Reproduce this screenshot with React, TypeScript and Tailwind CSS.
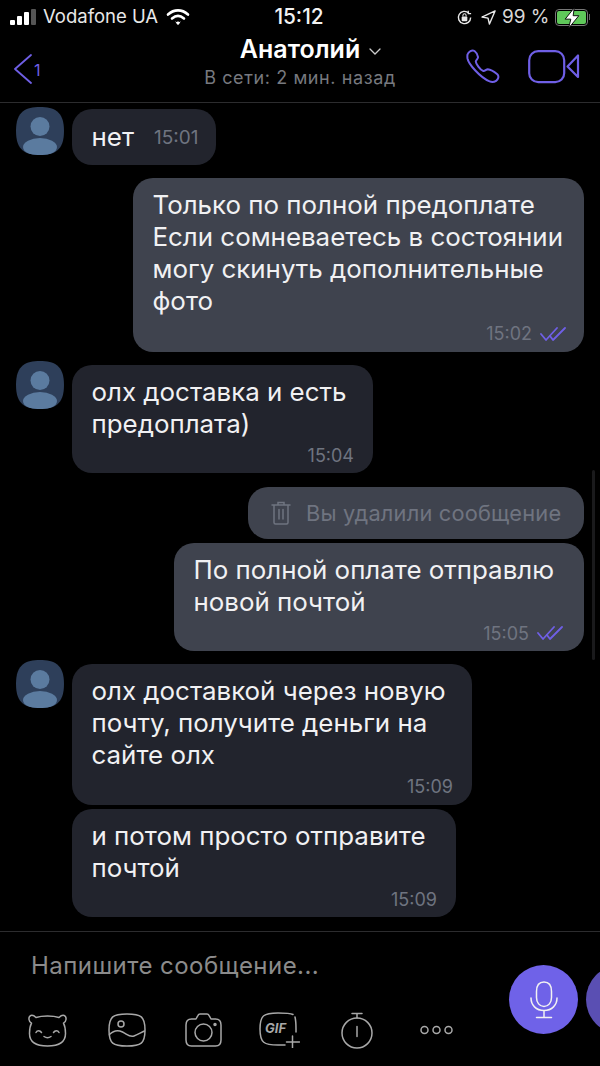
import React from 'react';

const PURPLE = '#6f5fe6';

const Avatar = () => (
  <svg viewBox="0 0 48 48" className="w-12 h-12 shrink-0">
    <defs>
      <clipPath id="avatarClip">
        <path d="M24 0C38 0 48 4 48 24C48 44 38 48 24 48C10 48 0 44 0 24C0 4 10 0 24 0Z" />
      </clipPath>
    </defs>
    <g clipPath="url(#avatarClip)">
      <rect width="48" height="48" fill="#2e3f5a" />
      <circle cx="24" cy="19.5" r="9.5" fill="#5b7b9f" />
      <ellipse cx="24" cy="40" rx="17" ry="9" fill="#5b7b9f" />
    </g>
  </svg>
);

const Checks = () => (
  <svg viewBox="0 0 26 14" className="w-[26px] h-[14px]" fill="none" stroke={PURPLE} strokeWidth="1.8" strokeLinecap="round" strokeLinejoin="round">
    <path d="M1 7l5 6L17 1" />
    <path d="M10 9l3 4L25 1" />
  </svg>
);

const Time = ({ t, read }: { t: string; read?: boolean }) => (
  <div className="flex items-center justify-end gap-2 h-5 text-[18px] text-[#6f7480]">
    <span>{t}</span>
    {read && <Checks />}
  </div>
);

const Line = ({ children }: { children: React.ReactNode }) => (
  <div className="text-[25.9px] leading-[32.3px] text-[#f1f1f3] whitespace-nowrap">{children}</div>
);

const Incoming = ({ lines, time, width, avatar, top }: { lines: string[]; time: string; width: string; avatar?: boolean; top: string }) => (
  <div className={`flex items-start gap-2 pl-4 ${top}`}>
    <div className="w-12 shrink-0 -mt-1">{avatar && <Avatar />}</div>
    <div className={`bg-[#22242d] rounded-[20px] pl-[19.5px] pr-[19px] pt-[10.5px] pb-[8px] ${width}`}>
      {lines.map((l) => <Line key={l}>{l}</Line>)}
      <div className="mt-[5px]"><Time t={time} /></div>
    </div>
  </div>
);

const Outgoing = ({ lines, time, width, top, inset, timeGap }: { lines: string[]; time: string; width: string; top: string; inset: string; timeGap: string }) => (
  <div className={`flex justify-end pr-4 ${top}`}>
    <div className={`bg-[#3f434e] rounded-[20px] pl-[19.5px] pt-[10.5px] pb-[8px] ${inset} ${width}`}>
      {lines.map((l) => <Line key={l}>{l}</Line>)}
      <div className={timeGap}><Time t={time} read /></div>
    </div>
  </div>
);

const StatusBar = () => (
  <div className="h-[34px] flex items-center justify-between pl-[10px] pr-[10px] text-white">
    <div className="flex items-center gap-[7px] w-[220px]">
      <div className="flex items-end gap-[2px] h-[16px]">
        <div className="w-[5px] h-[5px] bg-white rounded-[1px]" />
        <div className="w-[5px] h-[9px] bg-white rounded-[1px]" />
        <div className="w-[5px] h-[13px] bg-white rounded-[1px]" />
        <div className="w-[5px] h-[16px] bg-[#555] rounded-[1px]" />
      </div>
      <span className="text-[18.5px] text-[#e8e8e8]">Vodafone UA</span>
      <svg viewBox="0 0 24 18" className="w-[24px] h-[18px] ml-[1px]" fill="none" stroke="#fff" strokeWidth="2.6" strokeLinecap="round">
        <path d="M2 6.5C8 1 16 1 22 6.5" />
        <path d="M6 10.5C10 7 14 7 18 10.5" />
        <circle cx="12" cy="15" r="1.4" fill="#fff" stroke="none" />
        <path d="M10 14l2 2.5 2-2.5" strokeWidth="1" />
      </svg>
    </div>
    <span className="text-[20.8px] font-medium text-[#f2f2f2] ml-[-2px]">15:12</span>
    <div className="flex items-center justify-end gap-[5px] w-[220px]">
      <svg viewBox="0 0 18 18" className="w-[17px] h-[17px]" fill="none" stroke="#e8e8e8" strokeWidth="1.5">
        <path d="M15.5 9a6.5 6.5 0 1 1-2-4.7" />
        <path d="M13 1.8v3h3" strokeWidth="1.3" />
        <rect x="6" y="8" width="6" height="5" rx="1" fill="#e8e8e8" stroke="none" />
        <path d="M7.3 8V6.8a1.7 1.7 0 0 1 3.4 0V8" strokeWidth="1.1" />
      </svg>
      <svg viewBox="0 0 16 16" className="w-[15px] h-[15px] ml-[3px]" fill="none" stroke="#e8e8e8" strokeWidth="1.5" strokeLinejoin="round">
        <path d="M15 1L1 7.5l6.5 1.2L9 15z" />
      </svg>
      <span className="text-[19px] text-[#d8d8d8] ml-[1px]">99 %</span>
      <div className="flex items-center">
        <div className="relative w-[33px] h-[17px] rounded-[4px] border border-[#777] p-[1px]">
          <div className="w-full h-full rounded-[2px] bg-[#5fc85a]" />
          <svg viewBox="0 0 14 18" className="absolute left-[8px] -top-[3px] w-[16px] h-[22px]">
            <path d="M9 0L1 10h5l-2 8 9-11H8z" fill="#fff" stroke="#000" strokeWidth="0.8" />
          </svg>
        </div>
        <div className="w-[1.5px] h-[6px] bg-[#666] ml-[1px]" />
      </div>
    </div>
  </div>
);

const Header = () => (
  <div className="h-[69px] border-b border-[#2c2c2e] flex items-start relative">
    <div className="absolute left-[13px] top-[20px] flex items-center">
      <svg viewBox="0 0 20 30" className="w-[20px] h-[30px]" fill="none" stroke={PURPLE} strokeWidth="1.8" strokeLinecap="round" strokeLinejoin="round">
        <path d="M18 1L2 15l16 14" />
      </svg>
      <span className="text-[16px] text-[#6f5fe6] ml-[1px] mt-[1px]">1</span>
    </div>
    <div className="ml-[205px] flex flex-col items-center pt-[2px] w-[190px]">
      <div className="flex items-center gap-[9px] h-[29px] ml-[21px] -mt-[1px]">
        <span className="text-[25px] font-semibold text-white whitespace-nowrap">Анатолий</span>
        <svg viewBox="0 0 12 7" className="w-[12px] h-[7px] mt-[3px]" fill="none" stroke="#ccc" strokeWidth="1.3" strokeLinecap="round">
          <path d="M1 1l5 5 5-5" />
        </svg>
      </div>
      <span className="text-[18px] leading-[24px] text-[#77797f] tracking-[0.6px] mt-[2px] whitespace-nowrap">В сети: 2 мин. назад</span>
    </div>
    <svg viewBox="0 0 36 36" className="absolute left-[465px] top-[15px] w-[36px] h-[36px]" fill="none" stroke={PURPLE} strokeWidth="2" strokeLinejoin="round">
      <path d="M2.5 5.5C3.5 2.5 7 .5 9.5 2c1.5 1 3 4 3.5 6 .3 1.500-2 3-2.200 4.300-.2 2 4.500 8.800 7.500 9.700 1.500.4 3-1.800 4.500-1.700 2 .2 7 3 9.500 5 2 2 1 5-1.200 6.500-2 1.300-4 1.600-6.500.6C15 28.500 3.500 15 2.500 9.500c-.2-1.500-.2-2.800 0-4z" />
    </svg>
    <svg viewBox="0 0 52 34" className="absolute left-[528px] top-[16px] w-[52px] h-[34px]" fill="none" stroke={PURPLE} strokeWidth="2.200" strokeLinejoin="round">
      <rect x="1.200" y="1.200" width="35" height="31" rx="9" />
      <path d="M50 5.500V27L39.500 16.500z" />
    </svg>
  </div>
);

const iconStroke = { fill: 'none', stroke: '#a8a8a8', strokeWidth: 1.5, strokeLinecap: 'round', strokeLinejoin: 'round' } as const;

const ToolIcons = () => (
  <div className="flex items-center pl-[28px] h-[40px]">
    <svg viewBox="0 0 39 34" className="w-[39px] h-[34px]" {...iconStroke}>
      <path d="M8 4.500C4 .5 .5 2.500 1 6.500c.2 1.800 1.200 3 2.500 3.700C1.500 14 1.500 18 1.500 20.500 1.500 30 9 33 19.500 33S37.500 30 37.500 20.500c0-2.500 0-6.500-2-10.300 1.300-.7 2.300-1.900 2.500-3.700.5-4-3-6-7-2C25 2.500 14 2.500 8 4.500z" />
      <path d="M8 19.500c1.200-2.500 4-2.500 5.500 0M25.500 19.500c1.500-2.500 4.300-2.500 5.500 0M16 23.500c2 1.500 5 1.500 7 0" />
    </svg>
    <svg viewBox="0 0 38 34" className="w-[38px] h-[34px] ml-[41px]" {...iconStroke}>
      <path d="M19 1C33 1 37 3.500 37 17C37 30.500 33 33 19 33C5 33 1 30.500 1 17C1 3.500 5 1 19 1z" />
      <circle cx="13" cy="11" r="3" />
      <path d="M1.500 21.500c4-4 8-5 13-2.500s7 5.500 11.500 4 7-3.500 10.500-5" />
    </svg>
    <svg viewBox="0 0 37 34" className="w-[37px] h-[34px] ml-[39px]" {...iconStroke}>
      <path d="M11 6l2-3.700C13.400 1.500 14 1 15 1h7c1 0 1.600.5 2 1.300L26 6h4.500C34 6 36 8.500 36 12v15c0 3.500-2 6-5.500 6h-24C3 33 1 30.500 1 27V12c0-3.500 2-6 5.500-6z" />
      <circle cx="18.500" cy="19.500" r="8.500" />
      <circle cx="30" cy="11.500" r="1" fill="#a8a8a8" />
    </svg>
    <div className="relative w-[41px] h-[36px] ml-[37px]">
      <svg viewBox="0 0 41 36" className="w-[41px] h-[36px]" {...iconStroke}>
        <path d="M34 2.500C32 1.500 28 1 19 1C5 1 1 3 1 17C1 31 5 33 19 33H26M36 5C36.500 7 37 11 37 17V20" />
        <path d="M33.500 24v12M27.500 30h13" />
      </svg>
      <span className="absolute left-[6px] top-[7px] text-[13px] font-bold italic leading-[18px] text-[#a8a8a8]">GIF</span>
    </div>
    <svg viewBox="0 0 32 37" className="w-[32px] h-[37px] ml-[41px]" {...iconStroke}>
      <circle cx="16" cy="21" r="15" />
      <path d="M16 14.500v10M16 6V2M11 1.500h10" />
    </svg>
    <svg viewBox="0 0 33 10" className="w-[33px] h-[10px] ml-[47px] -mt-[1px]" fill="none" stroke="#a8a8a8" strokeWidth="1.500">
      <circle cx="4.500" cy="5" r="3.500" />
      <circle cx="16.500" cy="5" r="3.500" />
      <circle cx="28.500" cy="5" r="3.500" />
    </svg>
  </div>
);

const Composer = () => (
  <div className="h-[135px] border-t border-[#2c2c2e] flex overflow-hidden">
    <div className="w-[509px] shrink-0">
      <div className="pl-[31px] pt-[17px] h-[78px] text-[24px] leading-[34px] text-[#8b8b8b] tracking-[0.45px]">Напишите сообщение...</div>
      <ToolIcons />
    </div>
    <div className="mt-[33px] w-[69px] h-[69px] rounded-full bg-[#6f62e8] flex items-center justify-center shrink-0">
      <svg viewBox="0 0 28 38" className="w-[28px] h-[38px]" fill="none" stroke="#f2f2f2" strokeWidth="1.500" strokeLinecap="round">
        <path d="M14 1c5 0 7.500 4 7.500 9.500v6c0 5-3 9-7.500 9s-7.500-4-7.500-9v-6C6.500 5 9 1 14 1z" />
        <path d="M1 17c0 7 5 12.500 13 12.500S27 24 27 17M14 30v6M6.500 36.500h15" />
      </svg>
    </div>
    <div className="mt-[33px] ml-[8px] w-[69px] h-[69px] rounded-full bg-[#5a4fb3] shrink-0" />
  </div>
);

export default function App() {
  return (
    <div className="relative w-[600px] h-[1066px] bg-black overflow-hidden" style={{ fontFamily: 'Inter, "Noto Sans", sans-serif' }}>
      <StatusBar />
      <Header />
      <div className="h-[828px] overflow-hidden">
        <div className="flex items-start gap-2 pl-4 mt-[6px]">
          <div className="-mt-[2px]"><Avatar /></div>
          <div className="w-[144px] h-[56px] bg-[#22242d] rounded-[20px] pl-[19.5px] flex items-center">
            <span className="text-[25.9px] text-[#f1f1f3]">нет</span>
            <span className="text-[19px] text-[#6f7480] ml-[20px] mt-[2px]">15:01</span>
          </div>
        </div>
        <Outgoing top="mt-[13px]" width="w-[451px] h-[174px]" inset="pr-[18px]" timeGap="mt-[6px]" time="15:02" lines={['Только по полной предоплате', 'Если сомневаетесь в состоянии', 'могу скинуть дополнительные', 'фото']} />
        <Incoming top="mt-[13px]" width="w-[301px] h-[108px]" avatar time="15:04" lines={['олх доставка и есть', 'предоплата)']} />
        <div className="flex justify-end pr-4 mt-[14px]">
          <div className="w-[336px] h-[52px] bg-[#3f434e] rounded-[20px] flex items-center pl-[23px] gap-[15px]">
            <svg viewBox="0 0 20 24" className="w-[20px] h-[24px]" fill="none" stroke="#6f7480" strokeWidth="1.500" strokeLinecap="round">
              <path d="M1 4h18M7 4V1.500h6V4M3 4v17.500c0 1 .5 1.500 1.500 1.500h11c1 0 1.500-.5 1.500-1.500V4M8 8.500V18M12 8.500V18" />
            </svg>
            <span className="text-[21.8px] text-[#6f7480] tracking-[0.2px]">Вы удалили сообщение</span>
          </div>
        </div>
        <Outgoing top="mt-[4px]" width="w-[410px] h-[108px]" inset="pr-[21px]" timeGap="mt-[5px]" time="15:05" lines={['По полной оплате отправлю', 'новой почтой']} />
        <Incoming top="mt-[13px]" width="w-[400px] h-[141px]" avatar time="15:09" lines={['олх доставкой через новую', 'почту, получите деньги на', 'сайте олх']} />
        <Incoming top="mt-[4px]" width="w-[384px] h-[108px]" time="15:09" lines={['и потом просто отправите', 'почтой']} />
      </div>
      <Composer />
      <div className="absolute left-[592px] top-[470px] w-[3px] h-[190px] bg-[#1a1a1c] rounded-full" />
    </div>
  );
}
